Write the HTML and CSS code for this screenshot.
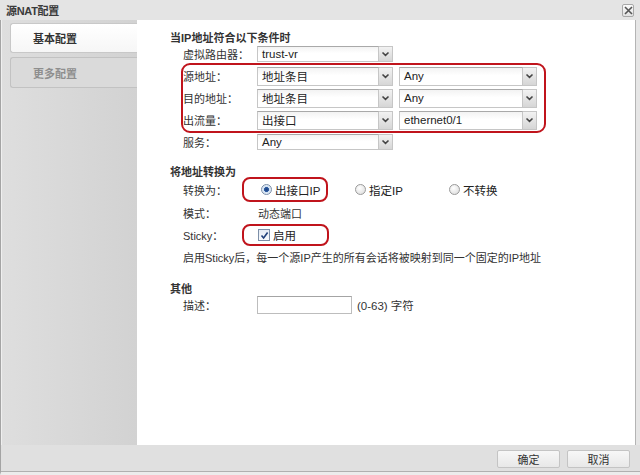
FILE: index.html
```html
<!DOCTYPE html>
<html lang="zh-CN">
<head>
<meta charset="utf-8">
<title>源NAT配置</title>
<link rel="stylesheet" href="styles.css">
</head>
<body>
<div class="dialog">
  <div class="titlebar">
    <span class="title">源NAT配置</span>
    <span class="close"><svg width="9" height="9" viewBox="0 0 9 9"><path d="M1 1L8 8M8 1L1 8" stroke="#555" stroke-width="1.6"/></svg></span>
  </div>
  <div class="main">
    <div class="sidebar">
      <div class="tab active">基本配置</div>
      <div class="tab">更多配置</div>
    </div>
    <div class="content">
      <div class="sec-title first">当IP地址符合以下条件时</div>
      <div class="row r-sm">
        <span class="lbl">虚拟路由器：</span>
        <div class="sel sm"><span class="val">trust-vr</span><span class="arr"><svg width="9" height="6" viewBox="0 0 9 6"><path d="M1.5 1.5L4.5 4.3L7.5 1.5" fill="none" stroke="#444" stroke-width="1.6"/></svg></span></div>
      </div>
      <div class="mark-group">
        <div class="row">
          <span class="lbl">源地址：</span>
          <div class="sel"><span class="val">地址条目</span><span class="arr"><svg width="9" height="6" viewBox="0 0 9 6"><path d="M1.5 1.5L4.5 4.3L7.5 1.5" fill="none" stroke="#444" stroke-width="1.6"/></svg></span></div>
          <div class="sel wide"><span class="val">Any</span><span class="arr"><svg width="9" height="6" viewBox="0 0 9 6"><path d="M1.5 1.5L4.5 4.3L7.5 1.5" fill="none" stroke="#444" stroke-width="1.6"/></svg></span></div>
        </div>
        <div class="row">
          <span class="lbl">目的地址：</span>
          <div class="sel"><span class="val">地址条目</span><span class="arr"><svg width="9" height="6" viewBox="0 0 9 6"><path d="M1.5 1.5L4.5 4.3L7.5 1.5" fill="none" stroke="#444" stroke-width="1.6"/></svg></span></div>
          <div class="sel wide"><span class="val">Any</span><span class="arr"><svg width="9" height="6" viewBox="0 0 9 6"><path d="M1.5 1.5L4.5 4.3L7.5 1.5" fill="none" stroke="#444" stroke-width="1.6"/></svg></span></div>
        </div>
        <div class="row">
          <span class="lbl">出流量：</span>
          <div class="sel"><span class="val">出接口</span><span class="arr"><svg width="9" height="6" viewBox="0 0 9 6"><path d="M1.5 1.5L4.5 4.3L7.5 1.5" fill="none" stroke="#444" stroke-width="1.6"/></svg></span></div>
          <div class="sel wide"><span class="val">ethernet0/1</span><span class="arr"><svg width="9" height="6" viewBox="0 0 9 6"><path d="M1.5 1.5L4.5 4.3L7.5 1.5" fill="none" stroke="#444" stroke-width="1.6"/></svg></span></div>
        </div>
      </div>
      <div class="row r-sm">
        <span class="lbl">服务：</span>
        <div class="sel sm"><span class="val">Any</span><span class="arr"><svg width="9" height="6" viewBox="0 0 9 6"><path d="M1.5 1.5L4.5 4.3L7.5 1.5" fill="none" stroke="#444" stroke-width="1.6"/></svg></span></div>
      </div>

      <div class="sec-title">将地址转换为</div>
      <div class="row r-conv">
        <span class="lbl short">转换为：</span>
        <div class="mark conv">
          <span class="radio on"></span><span class="opt-text">出接口IP</span>
        </div>
        <div class="opt opt2"><span class="radio"></span><span class="opt-text">指定IP</span></div>
        <div class="opt"><span class="radio"></span><span class="opt-text">不转换</span></div>
      </div>
      <div class="row r-mode">
        <span class="lbl mode">模式：</span>
        <span class="plain">动态端口</span>
      </div>
      <div class="row r-sticky">
        <span class="lbl short">Sticky：</span>
        <div class="mark sticky">
          <span class="check"><svg width="9" height="9" viewBox="0 0 9 9"><path d="M1.5 4.5L3.6 7L7.6 1.5" fill="none" stroke="#1f3f7a" stroke-width="1.6"/></svg></span><span class="opt-text">启用</span>
        </div>
      </div>
      <div class="row r-note">
        <span class="plain">启用Sticky后，每一个源IP产生的所有会话将被映射到同一个固定的IP地址</span>
      </div>

      <div class="sec-title">其他</div>
      <div class="row r-desc">
        <span class="lbl">描述：</span>
        <span class="input"></span>
        <span class="plain hint">(0-63) 字符</span>
      </div>
    </div>
  </div>
  <div class="footer">
    <button class="btn">确定</button>
    <button class="btn">取消</button>
  </div>
</div>
</body>
</html>
```

FILE: styles.css
```css
* { box-sizing: border-box; }
html, body {
  margin: 0;
  padding: 0;
  background: #e4e4e4;
}
body {
  font-family: "Liberation Sans", "Noto Sans CJK SC", sans-serif;
  font-size: 11px;
  color: #333;
}
.dialog {
  width: 640px;
  height: 475px;
  display: flex;
  flex-direction: column;
  background: #e4e4e4;
}
.titlebar {
  height: 20px;
  flex: none;
  display: flex;
  align-items: center;
  justify-content: space-between;
  padding: 0 6px 0 6px;
  background: #e4e4e4;
}
.title {
  font-weight: bold;
  font-size: 11px;
  color: #3a3a3a;
  letter-spacing: -0.3px;
}
.close {
  width: 12px;
  height: 13px;
  margin-top: 1px;
  border: 1px solid #a8a8a8;
  border-radius: 2px;
  background: linear-gradient(#fafafa, #e2e2e2);
  display: flex;
  align-items: center;
  justify-content: center;
}
.main {
  height: 425px;
  flex: none;
  display: flex;
  border-left: 1px solid #a4a4a4;
  padding-right: 4px;
  background: #e6e6e6;
}
.sidebar {
  width: 136px;
  flex: none;
  border-left: 1px solid #efefef;
  background: linear-gradient(to right, #dedede, #d2d2d2);
  padding-top: 3px;
}
.tab {
  margin-left: 8px;
  width: 127px;
  border: 1px solid #c8c8c8;
  border-right: none;
  border-radius: 3px 0 0 3px;
  padding-left: 22px;
  font-weight: bold;
  font-size: 11px;
  display: flex;
  align-items: center;
}
.tab.active {
  height: 30px;
  background: linear-gradient(#ffffff, #f6f6f6);
  color: #333;
}
.tab + .tab {
  margin-top: 4px;
  height: 31px;
  background: #dadada;
  color: #8e8e8e;
  border-color: #c2c2c2;
}
.content {
  width: 499px;
  flex: none;
  background: #fff;
  border-right: 1px solid #b4b4b4;
  padding-left: 33px;
  padding-top: 9px;
}
.sec-title {
  font-weight: bold;
  font-size: 11px;
  line-height: 10px;
  height: 10px;
  margin-top: 16px;
  color: #333;
}
.sec-title.first {
  margin-top: 2px;
  line-height: 14px;
  height: 14px;
}
.row {
  display: flex;
  align-items: center;
  height: 22px;
  margin-left: 13px;
}
.row.r-sm { height: 18px; }
.lbl {
  width: 74px;
  flex: none;
  color: #333;
}
.lbl.short { width: 59px; }
.lbl.mode { width: 75px; }
.mark-group {
  margin-left: 11px;
  width: 365px;
  border: 2px solid #c0141c;
  border-radius: 9px;
  padding-right: 7px;
}
.mark-group .row { margin-left: 0; }
.sel {
  display: flex;
  width: 136px;
  height: 19px;
  flex: none;
}
.sel.sm { height: 16px; }
.sel.wide {
  width: 138px;
  margin-left: 6px;
}
.val {
  flex: 1;
  border: 1px solid #c6c6c6;
  border-top-color: #a9a9a9;
  background: linear-gradient(#f3f3f3, #ffffff 45%);
  padding-left: 4px;
  font-size: 11.5px;
  color: #222;
  display: flex;
  align-items: center;
  white-space: nowrap;
  overflow: hidden;
}
.arr {
  width: 14px;
  flex: none;
  border: 1px solid #c6c6c6;
  border-left: none;
  background: linear-gradient(#f2f2f2, #d6d6d6);
  display: flex;
  align-items: center;
  justify-content: center;
}
.r-conv { height: 25px; }
.r-mode { height: 22px; }
.r-sticky { height: 22px; }
.r-note { height: 22px; }
.mark {
  height: 100%;
  border: 2px solid #c0141c;
  border-radius: 8px;
  display: flex;
  align-items: center;
  flex: none;
}
.mark.conv {
  width: 86px;
  padding-left: 17px;
}
.mark.sticky {
  width: 87px;
  padding-left: 14px;
}
.opt {
  display: flex;
  align-items: center;
  flex: none;
}
.opt2 {
  margin-left: 27px;
  width: 94px;
}
.radio {
  width: 11px;
  height: 11px;
  border-radius: 50%;
  border: 1px solid #9a9a9a;
  background: radial-gradient(circle at 40% 35%, #ffffff, #d8d8d8);
  display: inline-flex;
  align-items: center;
  justify-content: center;
  flex: none;
}
.radio.on {
  border-color: #7a8ea8;
  background: radial-gradient(circle, #1c3f7e 0, #2c5aa0 2.2px, #cfe0f2 2.8px, #e8eef6 5px);
}
.opt-text {
  margin-left: 3px;
  color: #222;
  font-size: 11.5px;
}
.check {
  width: 12px;
  height: 12px;
  border: 1px solid #7d8fa8;
  background: linear-gradient(#e4ebf4, #f8fafc);
  display: inline-flex;
  align-items: center;
  justify-content: center;
  flex: none;
}
.plain {
  color: #333;
}
.r-desc {
  height: 20px;
  margin-top: 1px;
}
.input {
  width: 95px;
  height: 18px;
  border: 1px solid #bdbdbd;
  border-top-color: #a4a4a4;
  background: #fff;
  flex: none;
}
.hint {
  margin-left: 5px;
  font-size: 11.5px;
}
.footer {
  height: 30px;
  flex: none;
  border-left: 1px solid #a4a4a4;
  background: #e0e0e0;
  display: flex;
  justify-content: flex-end;
  align-items: flex-start;
  gap: 7px;
  padding: 5px 10px 0 0;
  border-bottom: 3px solid #ececec;
  box-shadow: inset 0 -1px 0 #b0b0b0;
}
.btn {
  width: 63px;
  height: 18px;
  margin: 0;
  padding: 0;
  border: 1px solid #c4c4c4;
  border-radius: 2px;
  background: linear-gradient(#f7f7f7, #e8e8e8);
  font-family: "Liberation Sans", "Noto Sans CJK SC", sans-serif;
  font-size: 11px;
  color: #333;
}
```
